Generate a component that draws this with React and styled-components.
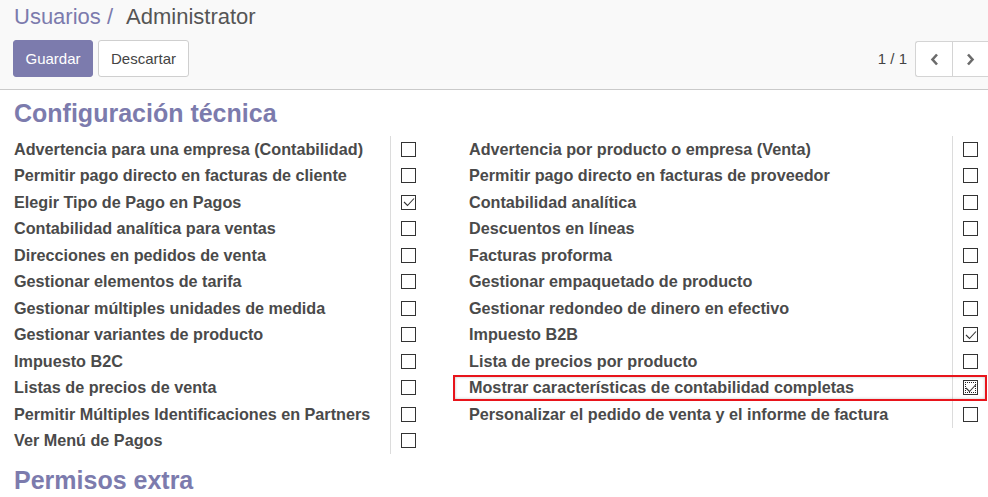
import React from "react";
import styled, { createGlobalStyle } from "styled-components";

const Global = createGlobalStyle`
  html, body { margin: 0; padding: 0; background: #fff; }
  body { font-family: "Liberation Sans", Arial, sans-serif; color: #4c4c4c; }
  * { box-sizing: border-box; }
`;

const Page = styled.div`
  width: 988px;
  height: 497px;
  overflow: hidden;
  background: #fff;
`;

const ControlPanel = styled.div`
  background: #f9f9f9;
  border-bottom: 1px solid #cacaca;
  height: 90px;
  padding: 4px 0 0 14px;
`;

const Breadcrumb = styled.div`
  font-size: 22px;
  line-height: 26px;
  color: #555;
  white-space: nowrap;
`;

const Crumb = styled.span`
  color: #7c7bad;
  margin-right: 13px;
`;

const ButtonBar = styled.div`
  display: flex;
  align-items: center;
  margin-top: 10px;
  margin-left: -1px;
`;

const Btn = styled.button`
  height: 37px;
  padding: 0 12px;
  font-family: "Liberation Sans", Arial, sans-serif;
  font-size: 15px;
  border-radius: 3px;
  margin-right: 5px;
  cursor: pointer;
  border: 1px solid ${(p) => (p.$primary ? "#7c7bad" : "#cfcfcf")};
  background: ${(p) => (p.$primary ? "#7c7bad" : "#fff")};
  color: ${(p) => (p.$primary ? "#fff" : "#444")};
  ${(p) => p.$primary && "padding: 0 11.5px;"}
`;

const Spacer = styled.div`
  flex: 1;
`;

const PagerValue = styled.span`
  font-size: 15px;
  color: #444;
  margin-right: 8px;
`;

const PagerGroup = styled.div`
  display: flex;
  height: 36px;
  border: 1px solid #d4d4d4;
  border-right: none;
  border-radius: 3px 0 0 3px;
  background: #fff;
  margin-top: 1px;
`;

const PagerBtn = styled.div`
  width: 36px;
  display: flex;
  align-items: center;
  justify-content: center;
  & + & { border-left: 1px solid #d4d4d4; }
`;

const Sheet = styled.div`
  padding: 8px 10px 0 14px;
`;

const Title = styled.h2`
  margin: 0 0 8px 0;
  font-size: 25px;
  line-height: 30px;
  font-weight: bold;
  color: #7c7bad;
  white-space: nowrap;
  ${(p) => p.$next && "margin-top: 11px;"}
`;

const Columns = styled.div`
  display: flex;
`;

const Group = styled.div`
  display: flex;
  flex-direction: column;
  ${(p) => (p.$left ? "width: 439px;" : "flex: 1;")}
`;

const Row = styled.div`
  position: relative;
  display: flex;
  align-items: center;
  height: 26.5px;
  ${(p) =>
    p.$highlight &&
    `
    &::after {
      content: "";
      position: absolute;
      left: 0;
      right: -9px;
      top: 0;
      bottom: 0;
      border: 2px solid #e8141b;
      box-shadow: inset 0 0 3px rgba(0,0,0,0.25);
      pointer-events: none;
    }
  `}
`;

const Label = styled.div`
  height: 100%;
  display: flex;
  align-items: center;
  font-size: 16.2px;
  font-weight: bold;
  color: #4a4a4a;
  white-space: nowrap;
  border-right: 1px solid #dcdcdc;
  ${(p) => (p.$left ? "width: 377px;" : "width: 500px; padding-left: 16px;")}
`;

const Box = styled.div`
  width: 15px;
  height: 15px;
  margin-left: 10px;
  border: 1px solid #333;
  background: #fff;
  display: flex;
  align-items: center;
  justify-content: center;
  ${(p) => p.$focus && "outline: 1px dotted #222; outline-offset: -3px;"}
`;

const Check = () => (
  <svg width="12" height="10" viewBox="0 0 12 10">
    <path d="M1 5 L4.5 8.5 L11 1.5" fill="none" stroke="#333" strokeWidth="1.1" />
  </svg>
);

const Chevron = ({ dir }) => (
  <svg width="9" height="13" viewBox="0 0 9 13">
    <path
      d={dir === "left" ? "M7 1.5 L2.5 6.5 L7 11.5" : "M2 1.5 L6.5 6.5 L2 11.5"}
      fill="none"
      stroke="#6b6b6b"
      strokeWidth="2.6"
    />
  </svg>
);

const left = [
  ["Advertencia para una empresa (Contabilidad)", false],
  ["Permitir pago directo en facturas de cliente", false],
  ["Elegir Tipo de Pago en Pagos", true],
  ["Contabilidad analítica para ventas", false],
  ["Direcciones en pedidos de venta", false],
  ["Gestionar elementos de tarifa", false],
  ["Gestionar múltiples unidades de medida", false],
  ["Gestionar variantes de producto", false],
  ["Impuesto B2C", false],
  ["Listas de precios de venta", false],
  ["Permitir Múltiples Identificaciones en Partners", false],
  ["Ver Menú de Pagos", false],
];

const right = [
  ["Advertencia por producto o empresa (Venta)", false],
  ["Permitir pago directo en facturas de proveedor", false],
  ["Contabilidad analítica", false],
  ["Descuentos en líneas", false],
  ["Facturas proforma", false],
  ["Gestionar empaquetado de producto", false],
  ["Gestionar redondeo de dinero en efectivo", false],
  ["Impuesto B2B", true],
  ["Lista de precios por producto", false],
  ["Mostrar características de contabilidad completas", true, true],
  ["Personalizar el pedido de venta y el informe de factura", false],
];

export default function App() {
  return (
    <Page>
      <Global />
      <ControlPanel>
        <Breadcrumb>
          <Crumb>Usuarios /</Crumb>Administrator
        </Breadcrumb>
        <ButtonBar>
          <Btn $primary>Guardar</Btn>
          <Btn>Descartar</Btn>
          <Spacer />
          <PagerValue>1 / 1</PagerValue>
          <PagerGroup>
            <PagerBtn>
              <Chevron dir="left" />
            </PagerBtn>
            <PagerBtn>
              <Chevron dir="right" />
            </PagerBtn>
          </PagerGroup>
        </ButtonBar>
      </ControlPanel>
      <Sheet>
        <Title>Configuración técnica</Title>
        <Columns>
          <Group $left>
            {left.map(([t, c]) => (
              <Row key={t}>
                <Label $left>{t}</Label>
                <Box>{c && <Check />}</Box>
              </Row>
            ))}
          </Group>
          <Group>
            {right.map(([t, c, h]) => (
              <Row key={t} $highlight={h}>
                <Label>{t}</Label>
                <Box $focus={h}>{c && <Check />}</Box>
              </Row>
            ))}
          </Group>
        </Columns>
        <Title $next>Permisos extra</Title>
      </Sheet>
    </Page>
  );
}
